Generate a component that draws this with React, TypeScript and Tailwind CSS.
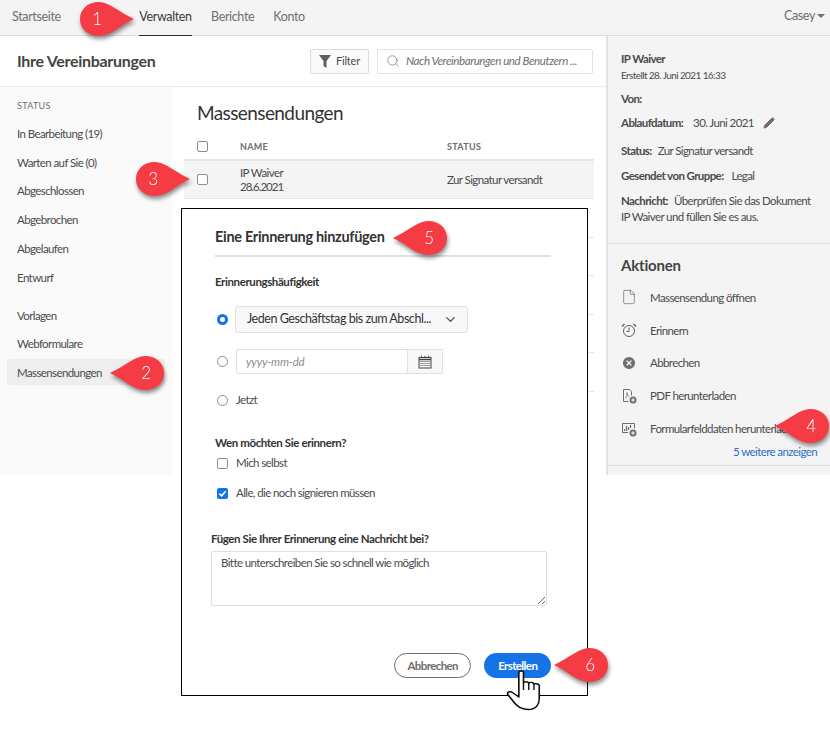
import React from "react";
import { Search, Pencil, ChevronDown, File, CircleX } from "lucide-react";

function Balloon({ cls, dir, n }: { cls: string; dir: "l" | "r"; n: string }) {
  const d = dir === "r"
    ? "M1 17C1 7 9 0 20 0 C30 0 40 10 55 17 C40 24 32 34 20 34 C9 34 1 27 1 17Z"
    : "M55 17C55 7 47 0 36 0 C26 0 16 10 1 17 C16 24 24 34 36 34 C47 34 55 27 55 17Z";
  return (
    <svg viewBox="0 0 56 34" className={`absolute w-[56px] h-[34px] overflow-visible drop-shadow-[1px_3px_2px_rgba(0,0,0,0.45)] ${cls}`}>
      <path d={d} fill="#f53b44" />
      <text x={dir === "r" ? 18 : 37} y="23" textAnchor="middle" fill="#fff" fontSize="17" fontFamily="Lato, sans-serif" fontWeight="300">{n}</text>
    </svg>
  );
}

function Box({ checked }: { checked?: boolean }) {
  return checked ? (
    <span className="w-[11px] h-[11px] rounded-[2px] bg-[#1473e6] flex items-center justify-center shrink-0">
      <svg viewBox="0 0 10 10" className="w-[9px] h-[9px]"><path d="M1.5 5.2 4 7.6 8.5 2.4" fill="none" stroke="#fff" strokeWidth="1.8" /></svg>
    </span>
  ) : (
    <span className="block w-[11px] h-[11px] rounded-[2px] border border-[#8e8e8e] bg-white shrink-0" />
  );
}

function Radio({ on }: { on?: boolean }) {
  return on ? (
    <span className="block w-[11px] h-[11px] rounded-full border-[3.5px] border-[#1473e6] bg-white shrink-0" />
  ) : (
    <span className="block w-[11px] h-[11px] rounded-full border border-[#8e8e8e] bg-white shrink-0" />
  );
}

const side = ["In Bearbeitung (19)", "Warten auf Sie (0)", "Abgeschlossen", "Abgebrochen", "Abgelaufen", "Entwurf"];
const side2 = ["Vorlagen", "Webformulare"];

function ClockIcon() {
  return (
    <svg viewBox="0 0 16 16" className="w-[16px] h-[16px]" fill="none" stroke="#5e5e5e">
      <circle cx="8" cy="9" r="5.500" />
      <path d="M8 5.500V9.500H5.500" />
      <path d="M1 4.500 3.500 2M15 4.500 12.500 2" strokeWidth="1.300" />
    </svg>
  );
}
function PdfIcon() {
  return (
    <svg viewBox="0 0 16 16" className="w-[16px] h-[16px]" fill="none" stroke="#6e6e6e">
      <path d="M2.5 1.5h6l2 2v4M2.5 1.5v12h5" />
      <path d="M4 10c2-1 2.5-4 2-5.500-.5 2 1 4 2.500 4" strokeWidth=".8" />
      <circle cx="12" cy="12" r="3.500" fill="#6e6e6e" stroke="none" />
      <path d="M10.200 12h3.600M12 10.200v3.600" stroke="#fff" />
    </svg>
  );
}
function DataIcon() {
  return (
    <svg viewBox="0 0 16 16" className="w-[16px] h-[16px]" fill="none" stroke="#6e6e6e">
      <path d="M7 11.500H1.500v-9h12v5" />
      <path d="M3.500 10V8M5.500 10V5M7.500 9V6M9.500 7V4" strokeWidth="1.200" />
      <circle cx="12" cy="12" r="3.500" fill="#6e6e6e" stroke="none" />
      <path d="M10.200 12h3.600M12 10.200v3.600" stroke="#fff" />
    </svg>
  );
}
function CalIcon() {
  return (
    <svg viewBox="0 0 14 14" className="w-[14px] h-[14px]" fill="none" stroke="#444">
      <rect x="1" y="2.500" width="12" height="10.500" />
      <path d="M1 4.500h12" strokeWidth="1.500" />
      <path d="M3.500 .8V3M7 .8V3M10.500 .8V3" />
      <path d="M2.500 6.500h9M2.500 8.500h9M2.500 10.500h9" strokeDasharray="1 1" />
    </svg>
  );
}

const actions: [React.ReactNode, string][] = [
  [<File size={16} strokeWidth={1} color="#5e5e5e" />, "Massensendung öffnen"],
  [<ClockIcon />, "Erinnern"],
  [<CircleX size={16} fill="#6e6e6e" color="#f4f4f4" strokeWidth={1.800} />, "Abbrechen"],
  [<PdfIcon />, "PDF herunterladen"],
  [<DataIcon />, "Formularfelddaten herunterladen"],
];

export default function App() {
  return (
    <div className="relative w-[830px] h-[754px] overflow-hidden bg-white text-[11.500px] text-[#4b4b4b] font-['Lato',sans-serif] tracking-[-0.6px]">
      <div className="h-[475px] flex flex-col">
        {/* nav */}
        <div className="h-[36px] shrink-0 bg-[#f4f4f4] border-b border-[#dcdcdc] flex items-stretch pl-[12px] pr-[5px] text-[12.500px] text-[#6e6e6e] tracking-[-0.35px]">
          <span className="flex items-center w-[127px]">Startseite</span>
          <span className="flex items-center w-[53px] justify-center border-b border-[#2c2c2c] h-[36px] text-[#3a3a3a]">Verwalten</span>
          <span className="flex items-center ml-[19px]">Berichte</span>
          <span className="flex items-center ml-[19px]">Konto</span>
          <span className="ml-auto flex items-center gap-[2px] pb-[3px] text-[#6e6e6e]">
            Casey
            <span className="w-0 h-0 border-x-[4px] border-x-transparent border-t-[4px] border-t-[#6e6e6e]" />
          </span>
        </div>
        <div className="flex-1 flex min-h-0">
          <div className="flex-1 flex flex-col min-w-0">
            {/* header */}
            <div className="h-[51px] shrink-0 bg-white border-b border-[#eaeaea] flex items-center pl-[17px] pr-[13px]">
              <span className="text-[16px] font-bold text-[#444] mr-auto tracking-[-0.3px]">Ihre Vereinbarungen</span>
              <button className="w-[59px] h-[25px] rounded-[2px] border border-[#dcdcdc] bg-[#fafafa] flex items-center justify-center gap-[5px] text-[11px] text-[#4b4b4b] mr-[8px] tracking-[-0.2px]">
                <svg viewBox="0 0 12 13" className="w-[12px] h-[13px]"><path d="M0 0h12L7.500 6v7l-3-2V6z" fill="#5e5e5e" /></svg>
                Filter
              </button>
              <div className="w-[216px] h-[25px] rounded-[2px] border border-[#e2e2e2] bg-white flex items-center pl-[8px] gap-[6px] text-[11.500px] italic text-[#6e6e6e] tracking-[-0.4px]">
                <Search size={14} strokeWidth={1.200} color="#6e6e6e" />
                Nach Vereinbarungen und Benutzern ...
              </div>
            </div>
            <div className="flex-1 flex min-h-0">
              {/* sidebar */}
              <div className="w-[172px] shrink-0 bg-[#fafafa] pt-[13px] pl-[7px] pr-[7px]">
                <div className="pl-[10px] text-[9px] tracking-[0.3px] text-[#6e6e6e] leading-[12px] mb-[7px]">STATUS</div>
                {side.map((s) => (
                  <div key={s} className="h-[28.800px] flex items-center pl-[10px]">{s}</div>
                ))}
                <div className="h-[9px]" />
                {side2.map((s) => (
                  <div key={s} className="h-[28.800px] flex items-center pl-[10px]">{s}</div>
                ))}
                <div className="h-[26px] mt-[1px] flex items-center pl-[10px] rounded-[2px] bg-[#eeeeee]">Massensendungen</div>
              </div>
              {/* main */}
              <div className="flex-1 bg-white pl-[12px] pr-[12px] min-w-0">
                <div className="pl-[13px] pt-[13px] h-[45px] text-[19px] text-[#333] leading-[26px] tracking-[-0.6px]">Massensendungen</div>
                <div className="flex items-center h-[29px] border-b-2 border-[#e6e6e6] pl-[13px] pt-[2px] text-[9px] font-bold tracking-[0.3px] text-[#6e6e6e]">
                  <Box />
                  <span className="ml-[32px] w-[207px]">NAME</span>
                  <span>STATUS</span>
                </div>
                <div className="flex items-center h-[38px] bg-[#f4f4f4] border-b border-[#e6e6e6] pl-[13px]">
                  <Box />
                  <div className="ml-[32px] w-[207px] leading-[14px]">
                    <div>IP Waiver</div>
                    <div className="tracking-[-1px]">28.6.2021</div>
                  </div>
                  <span>Zur Signatur versandt</span>
                </div>
                {[0, 1, 2, 3, 4].map((i) => (
                  <div key={i} className="h-[38.500px] border-b border-[#e6e6e6]" />
                ))}
              </div>
            </div>
          </div>
          {/* right panel */}
          <div className="w-[224px] shrink-0 bg-[#f4f4f4] border-l-2 border-[#e3e3e3] pl-[13px] pr-[13px] pt-[15px]">
            <div className="font-bold leading-[16px] text-[#4b4b4b]">IP Waiver</div>
            <div className="text-[10px] leading-[14px] mt-[1px] tracking-[-0.6px]">Erstellt 28. Juni 2021 16:33</div>
            <div className="font-bold leading-[16px] mt-[9px]">Von:</div>
            <div className="flex items-center h-[16px] mt-[8px]">
              <b className="font-bold">Ablaufdatum:</b>
              <span className="ml-[10px]">30. Juni 2021</span>
              <Pencil size={12} className="ml-[9px]" fill="#6e6e6e" color="#6e6e6e" />
            </div>
            <div className="flex leading-[16px] mt-[12px]"><b>Status:</b><span className="ml-[6px]">Zur Signatur versandt</span></div>
            <div className="flex leading-[16px] mt-[9px]"><b>Gesendet von Gruppe:</b><span className="ml-[8px]">Legal</span></div>
            <div className="leading-[16px] mt-[9px]"><b className="mr-[6px]">Nachricht:</b><span>Überprüfen Sie das Dokument IP Waiver und füllen Sie es aus.</span></div>
            <div className="border-t border-[#dedede] mt-[18px] -mx-[13px]" />
            <div className="text-[15px] font-bold leading-[20px] mt-[11px] text-[#444] tracking-[-0.2px]">Aktionen</div>
            <div className="mt-[6px]">
              {actions.map(([ic, t]) => (
                <div key={t} className="h-[32.800px] flex items-center whitespace-nowrap">
                  <span className="w-[29px] shrink-0 flex">{ic}</span>
                  {t}
                </div>
              ))}
            </div>
            <div className="text-right text-[#2c6fc4] leading-[16px] mt-[-1px]">5 weitere anzeigen</div>
            <div className="border-t border-[#dedede] mt-[5px] -mx-[13px]" />
          </div>
        </div>
      </div>

      {/* modal */}
      <div className="absolute left-[181px] top-[208px] w-[407px] h-[488px] bg-white border border-black pl-[33px] pr-[36px] pt-[18px]">
        <div className="h-[30px] border-b-2 border-[#e0e0e0] text-[14.500px] font-bold text-[#333] leading-[20px] tracking-[-0.3px]">Eine Erinnerung hinzufügen</div>
        <div className="mt-[17px] font-bold text-[#333] leading-[16px] tracking-[-0.4px]">Erinnerungshäufigkeit</div>
        <div className="mt-[16px] flex items-center ml-[2px]">
          <Radio on />
          <div className="ml-[7px] w-[233px] h-[27px] rounded-[3px] border border-[#e0e0e0] bg-[#f8f8f8] flex items-center pl-[11px] pr-[9px] text-[12.500px] text-[#333] tracking-[-0.45px]">
            Jeden Geschäftstag bis zum Abschl...
            <ChevronDown size={15} className="ml-auto" color="#4b4b4b" />
          </div>
        </div>
        <div className="mt-[16px] flex items-center ml-[2px]">
          <Radio />
          <div className="ml-[8px] w-[172px] h-[25px] rounded-l-[2px] border border-[#e0e0e0] bg-white flex items-center pl-[9px] text-[11.500px] italic text-[#8e8e8e] tracking-[-0.2px]">yyyy-mm-dd</div>
          <div className="w-[35px] h-[25px] rounded-r-[2px] border border-l-0 border-[#e0e0e0] bg-[#f8f8f8] flex items-center justify-center">
            <CalIcon />
          </div>
        </div>
        <div className="mt-[18px] flex items-start h-[22px] ml-[2px]">
          <span className="mt-[3px]"><Radio /></span>
          <span className="ml-[8px] text-[#4b4b4b] leading-[16px]">Jetzt</span>
        </div>
        <div className="mt-[21px] font-bold text-[#333] leading-[16px] tracking-[-0.4px]">Wen möchten Sie erinnern?</div>
        <div className="mt-[4px] ml-[2px] flex items-center gap-[8px] h-[16px]"><Box />Mich selbst</div>
        <div className="mt-[14px] ml-[2px] flex items-center gap-[8px] h-[16px]"><Box checked />Alle, die noch signieren müssen</div>
        <div className="mt-[30px] -ml-[4px] font-bold text-[#333] leading-[16px] tracking-[-0.4px]">Fügen Sie Ihrer Erinnerung eine Nachricht bei?</div>
        <textarea
          readOnly
          defaultValue="Bitte unterschreiben Sie so schnell wie möglich"
          className="block mt-[4px] -ml-[4px] w-[336px] h-[55px] rounded-[2px] border border-[#dedede] bg-white pl-[9px] pt-[3px] text-[#4b4b4b] leading-[16px] outline-none"
        />
        <div className="mt-[47px] flex gap-[13px] ml-[179px]">
          <button className="w-[78px] h-[25px] rounded-full border border-[#6e6e6e] bg-white font-bold text-[#6e6e6e]">Abbrechen</button>
          <button className="w-[67px] h-[25px] rounded-full bg-[#1473e6] font-bold text-white">Erstellen</button>
        </div>
      </div>

      {/* hand cursor */}
      <svg viewBox="0 0 30 42" preserveAspectRatio="none" className="absolute left-[506px] top-[669px] w-[35px] h-[42px]">
        <path d="M11 3.500C11 1.500 15 1.500 15 3.500V14C15 12.500 19 12 19.500 14.500 19.500 12.800 24 12.800 24 15.500 24.500 14 28.500 14.500 28.500 17V29C28.500 35 26 40.500 19 40.500 13 40.500 10 38 7 33.500L1.500 25.500C.5 23 3.500 22 5.500 23.500L11 28Z" fill="#fff" stroke="#111" strokeWidth="1.400" strokeLinejoin="round" />
        <path d="M15 14V21M19.500 14.500V21M24 15.500V21" stroke="#111" strokeWidth="1.200" fill="none" />
      </svg>

      <Balloon cls="left-[79px] top-[2px]" dir="r" n="1" />
      <Balloon cls="left-[109px] top-[356px]" dir="l" n="2" />
      <Balloon cls="left-[135px] top-[162px]" dir="r" n="3" />
      <Balloon cls="left-[774px] top-[409px]" dir="l" n="4" />
      <Balloon cls="left-[392px] top-[221px]" dir="l" n="5" />
      <Balloon cls="left-[553px] top-[648px]" dir="l" n="6" />
    </div>
  );
}
